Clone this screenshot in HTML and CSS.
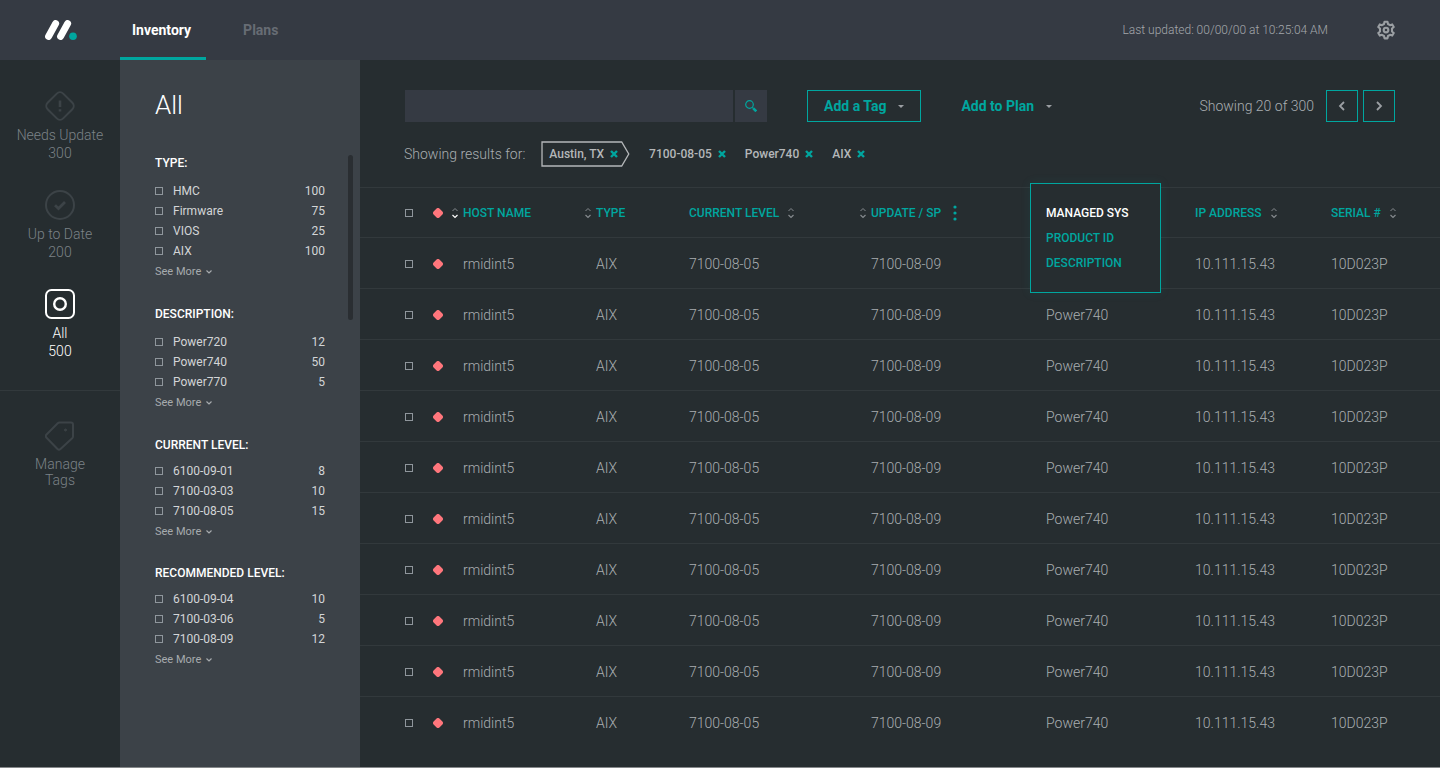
FILE: index.html
```html
<!DOCTYPE html>
<html lang="en">
<head>
<meta charset="utf-8">
<title>Inventory</title>
<link rel="stylesheet" href="styles.css">
</head>
<body>
<svg class="sprite" aria-hidden="true">
  <symbol id="sort" viewBox="0 0 8 12"><path d="M1.500 4 4 1.500 6.500 4" class="sort-up"/><path d="M1.500 8 4 10.500 6.500 8" class="sort-down"/></symbol>
  <symbol id="down" viewBox="0 0 8 6"><path d="M1.500 1.500 4 4 6.500 1.500" fill="none" stroke="currentColor" stroke-width="1.200"/></symbol>
  <symbol id="caret" viewBox="0 0 6 3"><path d="M0 0h6L3 3z" fill="currentColor"/></symbol>
  <symbol id="cross" viewBox="0 0 8 8"><path d="M1 1l6 6M7 1 1 7" fill="none" stroke="currentColor" stroke-width="2.400"/></symbol>
  <symbol id="gem" viewBox="0 0 10 10"><path d="M5 2 8 5 5 8 2 5z" fill="currentColor" stroke="currentColor" stroke-width="4" stroke-linejoin="round"/></symbol>
</svg>

<header class="topbar">
  <a class="logo" href="#" aria-label="Home">
    <svg width="32" height="20" viewBox="0 0 32 20"><path d="M3.600 16.400 10.600 3.600M15.600 16.400 22.600 3.600" stroke="#fff" stroke-width="7" stroke-linecap="round"/><circle cx="28" cy="16.200" r="3.800" fill="#00a69f"/></svg>
  </a>
  <nav class="tabs">
    <a class="tab tab-active" href="#">Inventory</a>
    <a class="tab" href="#">Plans</a>
  </nav>
  <p class="updated">Last updated: 00/00/00 at 10:25:04 AM</p>
  <button class="icon-button gear" aria-label="Settings">
    <svg width="20" height="20" viewBox="0 0 24 24" fill="none" stroke="currentColor" stroke-width="2.500" stroke-linejoin="round"><path d="M9.600 4.800 10.200 2h3.600l.6 2.800 2.400 1.400 2.700-.9 1.800 3.100-2.100 1.900v3.400l2.100 1.900-1.800 3.100-2.700-.9-2.400 1.400-.6 2.800h-3.600l-.6-2.800-2.400-1.400-2.700.9-1.800-3.100 2.100-1.900v-3.400L2.700 8.400l1.800-3.100 2.700.9z"/><circle cx="12" cy="12" r="2.800"/></svg>
  </button>
</header>

<div class="body">
  <nav class="rail">
    <div class="rail-group">
      <a class="rail-item" href="#">
        <svg width="30" height="30" viewBox="0 0 30 30" fill="none" stroke="currentColor" stroke-width="2"><rect x="4" y="4" width="22" height="22" rx="4.500" transform="rotate(45 15 15)"/><path d="M15 9.500v6.500M15 18.200v2.300" stroke-width="2.600"/></svg>
        <span>Needs Update</span><span>300</span>
      </a>
      <a class="rail-item" href="#">
        <svg width="30" height="30" viewBox="0 0 30 30" fill="none" stroke="currentColor" stroke-width="2"><circle cx="15" cy="15" r="14"/><path d="M10 15.200 13.500 18.500 20 12" stroke-width="2.800"/></svg>
        <span>Up to Date</span><span>200</span>
      </a>
      <a class="rail-item rail-active" href="#">
        <svg width="30" height="30" viewBox="0 0 30 30" fill="none" stroke="currentColor" stroke-width="2"><rect x="1" y="1" width="28" height="28" rx="5.500"/><circle cx="15" cy="15" r="5.800" stroke-width="2.400"/></svg>
        <span>All</span><span>500</span>
      </a>
    </div>
    <div class="rail-group">
      <a class="rail-item rail-tags" href="#">
        <svg width="30" height="30" viewBox="0 0 30 30" fill="none" stroke="currentColor" stroke-width="2" stroke-linejoin="round"><path d="M14.500 1.500H26q2 0 2 2v12q0 1-.8 1.800L15.500 28q-1.500 1.200-3 0L1.300 16.500q-1-1.500 0-2.800L12.700 2.300q.8-.8 1.800-.8z"/><circle cx="20.500" cy="9" r="1" fill="currentColor" stroke-width="1"/></svg>
        <span>Manage</span><span>Tags</span>
      </a>
    </div>
  </nav>

  <aside class="filters">
    <h1 class="filters-title">All</h1>
    <fieldset class="filter">
      <legend>TYPE:</legend>
      <label class="option"><input type="checkbox" class="check"><span>HMC</span><span class="count">100</span></label>
      <label class="option"><input type="checkbox" class="check"><span>Firmware</span><span class="count">75</span></label>
      <label class="option"><input type="checkbox" class="check"><span>VIOS</span><span class="count">25</span></label>
      <label class="option"><input type="checkbox" class="check"><span>AIX</span><span class="count">100</span></label>
      <button class="more">See More <svg width="8" height="6"><use href="#down"/></svg></button>
    </fieldset>
    <fieldset class="filter">
      <legend>DESCRIPTION:</legend>
      <label class="option"><input type="checkbox" class="check"><span>Power720</span><span class="count">12</span></label>
      <label class="option"><input type="checkbox" class="check"><span>Power740</span><span class="count">50</span></label>
      <label class="option"><input type="checkbox" class="check"><span>Power770</span><span class="count">5</span></label>
      <button class="more">See More <svg width="8" height="6"><use href="#down"/></svg></button>
    </fieldset>
    <fieldset class="filter filter-tight">
      <legend>CURRENT LEVEL:</legend>
      <label class="option"><input type="checkbox" class="check"><span>6100-09-01</span><span class="count">8</span></label>
      <label class="option"><input type="checkbox" class="check"><span>7100-03-03</span><span class="count">10</span></label>
      <label class="option"><input type="checkbox" class="check"><span>7100-08-05</span><span class="count">15</span></label>
      <button class="more">See More <svg width="8" height="6"><use href="#down"/></svg></button>
    </fieldset>
    <fieldset class="filter filter-tight">
      <legend>RECOMMENDED LEVEL:</legend>
      <label class="option"><input type="checkbox" class="check"><span>6100-09-04</span><span class="count">10</span></label>
      <label class="option"><input type="checkbox" class="check"><span>7100-03-06</span><span class="count">5</span></label>
      <label class="option"><input type="checkbox" class="check"><span>7100-08-09</span><span class="count">12</span></label>
      <button class="more">See More <svg width="8" height="6"><use href="#down"/></svg></button>
    </fieldset>
    <div class="scroll-thumb"></div>
  </aside>

  <main class="main">
    <div class="toolbar">
      <form class="search">
        <input class="search-box" type="text" aria-label="Search">
        <button class="search-button" type="button" aria-label="Run search"><svg width="12" height="12" viewBox="0 0 12 12" fill="none" stroke="currentColor"><circle cx="4.500" cy="4.500" r="3.800" stroke-width="1.200"/><path d="M7.300 7.300 8.500 8.500" stroke-width="1.200"/><path d="M8.300 8.300 11.300 11.300" stroke-width="2.600"/></svg></button>
      </form>
      <button class="action action-outlined">Add a Tag <svg width="6" height="3"><use href="#caret"/></svg></button>
      <button class="action">Add to Plan <svg width="6" height="3"><use href="#caret"/></svg></button>
      <p class="showing">Showing 20 of 300</p>
      <div class="pager">
        <button class="page-button" aria-label="Previous page"><svg width="8" height="10" viewBox="0 0 8 10"><path d="M6 1 2 5l4 4" fill="none" stroke="currentColor" stroke-width="1.800"/></svg></button>
        <button class="page-button" aria-label="Next page"><svg width="8" height="10" viewBox="0 0 8 10"><path d="M2 1l4 4-4 4" fill="none" stroke="currentColor" stroke-width="1.800"/></svg></button>
      </div>
    </div>

    <div class="results">
      <p class="results-label">Showing results for:</p>
      <span class="chip chip-tag">
        <svg class="chip-shape" viewBox="0 0 88 26" preserveAspectRatio="none" aria-hidden="true"><path d="M1 1H80L87 13 80 25H1z" fill="none" stroke="currentColor" stroke-width="1.300"/></svg>
        Austin, TX <button class="remove" aria-label="Remove Austin, TX"><svg width="8" height="8"><use href="#cross"/></svg></button></span>
      <span class="chip">7100-08-05 <button class="remove" aria-label="Remove 7100-08-05"><svg width="8" height="8"><use href="#cross"/></svg></button></span>
      <span class="chip">Power740 <button class="remove" aria-label="Remove Power740"><svg width="8" height="8"><use href="#cross"/></svg></button></span>
      <span class="chip">AIX <button class="remove" aria-label="Remove AIX"><svg width="8" height="8"><use href="#cross"/></svg></button></span>
    </div>

    <table class="hosts">
      <colgroup><col class="c-check"><col class="c-status"><col class="c-host"><col class="c-type"><col class="c-level"><col class="c-update"><col class="c-managed"><col class="c-ip"><col class="c-serial"></colgroup>
      <thead>
        <tr>
          <th class="lead"><input type="checkbox" class="check" aria-label="Select all"></th>
          <th><svg class="gem" width="10" height="10"><use href="#gem"/></svg></th>
          <th><button class="sort sort-desc"><svg width="8" height="12"><use href="#sort"/></svg>HOST NAME</button></th>
          <th><button class="sort"><svg width="8" height="12"><use href="#sort"/></svg>TYPE</button></th>
          <th><button class="sort sort-after">CURRENT LEVEL<svg width="8" height="12"><use href="#sort"/></svg></button></th>
          <th><div class="head-pair"><button class="sort"><svg width="8" height="12"><use href="#sort"/></svg>UPDATE / SP</button><button class="icon-button dots" aria-label="Column options"><svg width="4" height="16" viewBox="0 0 4 16" fill="currentColor"><circle cx="2" cy="2" r="1.600"/><circle cx="2" cy="8" r="1.600"/><circle cx="2" cy="14" r="1.600"/></svg></button></div></th>
          <th class="managed">
            <div class="menu"><button class="menu-item menu-current">MANAGED SYS</button><button class="menu-item">PRODUCT ID</button><button class="menu-item">DESCRIPTION</button></div>
          </th>
          <th><button class="sort sort-after">IP ADDRESS<svg width="8" height="12"><use href="#sort"/></svg></button></th>
          <th><button class="sort sort-after">SERIAL #<svg width="8" height="12"><use href="#sort"/></svg></button></th>
        </tr>
      </thead>
      <tbody>
        <tr><td class="lead"><input type="checkbox" class="check" aria-label="Select row 1"></td><td><svg class="gem" width="10" height="10"><use href="#gem"/></svg></td><td class="inset">rmidint5</td><td class="inset">AIX</td><td>7100-08-05</td><td class="inset">7100-08-09</td><td></td><td>10.111.15.43</td><td>10D023P</td></tr>
        <tr><td class="lead"><input type="checkbox" class="check" aria-label="Select row 2"></td><td><svg class="gem" width="10" height="10"><use href="#gem"/></svg></td><td class="inset">rmidint5</td><td class="inset">AIX</td><td>7100-08-05</td><td class="inset">7100-08-09</td><td>Power740</td><td>10.111.15.43</td><td>10D023P</td></tr>
        <tr><td class="lead"><input type="checkbox" class="check" aria-label="Select row 3"></td><td><svg class="gem" width="10" height="10"><use href="#gem"/></svg></td><td class="inset">rmidint5</td><td class="inset">AIX</td><td>7100-08-05</td><td class="inset">7100-08-09</td><td>Power740</td><td>10.111.15.43</td><td>10D023P</td></tr>
        <tr><td class="lead"><input type="checkbox" class="check" aria-label="Select row 4"></td><td><svg class="gem" width="10" height="10"><use href="#gem"/></svg></td><td class="inset">rmidint5</td><td class="inset">AIX</td><td>7100-08-05</td><td class="inset">7100-08-09</td><td>Power740</td><td>10.111.15.43</td><td>10D023P</td></tr>
        <tr><td class="lead"><input type="checkbox" class="check" aria-label="Select row 5"></td><td><svg class="gem" width="10" height="10"><use href="#gem"/></svg></td><td class="inset">rmidint5</td><td class="inset">AIX</td><td>7100-08-05</td><td class="inset">7100-08-09</td><td>Power740</td><td>10.111.15.43</td><td>10D023P</td></tr>
        <tr><td class="lead"><input type="checkbox" class="check" aria-label="Select row 6"></td><td><svg class="gem" width="10" height="10"><use href="#gem"/></svg></td><td class="inset">rmidint5</td><td class="inset">AIX</td><td>7100-08-05</td><td class="inset">7100-08-09</td><td>Power740</td><td>10.111.15.43</td><td>10D023P</td></tr>
        <tr><td class="lead"><input type="checkbox" class="check" aria-label="Select row 7"></td><td><svg class="gem" width="10" height="10"><use href="#gem"/></svg></td><td class="inset">rmidint5</td><td class="inset">AIX</td><td>7100-08-05</td><td class="inset">7100-08-09</td><td>Power740</td><td>10.111.15.43</td><td>10D023P</td></tr>
        <tr><td class="lead"><input type="checkbox" class="check" aria-label="Select row 8"></td><td><svg class="gem" width="10" height="10"><use href="#gem"/></svg></td><td class="inset">rmidint5</td><td class="inset">AIX</td><td>7100-08-05</td><td class="inset">7100-08-09</td><td>Power740</td><td>10.111.15.43</td><td>10D023P</td></tr>
        <tr><td class="lead"><input type="checkbox" class="check" aria-label="Select row 9"></td><td><svg class="gem" width="10" height="10"><use href="#gem"/></svg></td><td class="inset">rmidint5</td><td class="inset">AIX</td><td>7100-08-05</td><td class="inset">7100-08-09</td><td>Power740</td><td>10.111.15.43</td><td>10D023P</td></tr>
        <tr><td class="lead"><input type="checkbox" class="check" aria-label="Select row 10"></td><td><svg class="gem" width="10" height="10"><use href="#gem"/></svg></td><td class="inset">rmidint5</td><td class="inset">AIX</td><td>7100-08-05</td><td class="inset">7100-08-09</td><td>Power740</td><td>10.111.15.43</td><td>10D023P</td></tr>
      </tbody>
    </table>
  </main>
</div>
</body>
</html>
```

FILE: styles.css
```css
:root {
  --teal: #00a69f;
  --ground: #262d30;
  --line: #32393c;
  --muted: #9b9fa3;
}

* { box-sizing: border-box; }

body {
  margin: 0;
  min-height: 100vh;
  display: flex;
  flex-direction: column;
  background: var(--ground);
  color: #a9adb0;
  font-family: Roboto, "Liberation Sans", sans-serif;
  font-size: 14px;
  font-weight: 300;
  line-height: 18px;
  border-bottom: 1px solid #85888a;
}

p, h1 { margin: 0; }
a { color: inherit; text-decoration: none; }
svg { display: block; flex: none; }
.sprite { position: absolute; width: 0; height: 0; }

button {
  padding: 0;
  border: 0;
  background: none;
  color: inherit;
  font: inherit;
  white-space: nowrap;
  cursor: pointer;
}

.check {
  appearance: none;
  display: block;
  flex: none;
  width: 8px;
  height: 8px;
  margin: 0;
  border: 1px solid #8f969c;
}
.check:checked { background: var(--teal); }

/* Top bar */
.topbar {
  display: flex;
  align-items: center;
  height: 60px;
  padding-right: 44px;
  background: #353a43;
}
.logo { width: 120px; padding-left: 45px; }
.tabs { display: flex; gap: 25px; align-self: stretch; }
.tab {
  display: flex;
  align-items: center;
  padding: 3px 15px 0 12px;
  border-bottom: 3px solid transparent;
  color: #676c74;
  font-weight: 700;
}
.tab-active { border-color: var(--teal); color: #fff; }
.updated { margin-left: auto; color: #a4a8ac; font-size: 12px; }
.gear { margin-left: 48px; color: var(--muted); }

.body { flex: 1; display: flex; }

/* Status rail */
.rail { width: 120px; flex: none; }
.rail-group {
  display: flex;
  flex-direction: column;
  gap: 28px;
  padding: 31px 0 30px;
}
.rail-group + .rail-group { padding-top: 30px; border-top: 1px solid var(--line); }
.rail-item {
  display: flex;
  flex-direction: column;
  align-items: center;
  color: #7b8287;
}
.rail-item svg { margin-bottom: 5px; color: #3c4347; }
.rail-active, .rail-active svg { color: #fff; }
.rail-tags { line-height: 16px; }

/* Filters */
.filters {
  position: relative;
  width: 240px;
  flex: none;
  padding: 29px 35px;
  background: #3c4248;
}
.filters-title {
  margin-bottom: 32px;
  color: #fff;
  font-size: 26px;
  font-weight: 300;
  line-height: 32px;
}
.filter {
  display: flex;
  flex-direction: column;
  min-width: 0;
  margin: 0 0 21px;
  padding: 0;
  border: 0;
}
.filter legend {
  margin-bottom: 8px;
  padding: 0;
  color: #fff;
  font-size: 12px;
  font-weight: 500;
  line-height: 20px;
}
.filter-tight { margin-bottom: 20px; }
.filter-tight legend { margin-bottom: 6px; }
.option {
  display: flex;
  align-items: center;
  gap: 10px;
  color: #d3d5d7;
  font-size: 12px;
  font-weight: 400;
  line-height: 20px;
}
.count { margin-left: auto; }
.more {
  display: flex;
  align-items: center;
  gap: 4px;
  color: #a7abae;
  font-size: 11px;
  font-weight: 400;
  line-height: 22px;
}
.scroll-thumb {
  position: absolute;
  top: 95px;
  right: 7px;
  width: 5px;
  height: 165px;
  border-radius: 3px;
  background: #2a2e32;
}

/* Main */
.main { flex: 1; min-width: 0; padding-top: 30px; }
.toolbar {
  display: flex;
  align-items: center;
  padding: 0 45px;
}
.search {
  display: flex;
  flex: 0 1 362px;
  gap: 2px;
  margin-right: 40px;
}
.search-box {
  flex: 1;
  min-width: 0;
  height: 32px;
  padding: 0 10px;
  border: 0;
  outline: 0;
  background: #353a43;
  color: #fff;
  font: inherit;
}
.search-button {
  display: grid;
  place-items: center;
  width: 32px;
  height: 32px;
  background: #353a43;
  color: var(--teal);
}
.action {
  display: flex;
  align-items: center;
  gap: 12px;
  height: 32px;
  margin-right: 40px;
  color: var(--teal);
  font-weight: 700;
}
.action svg { color: var(--muted); }
.action-outlined { padding: 0 16px; border: 1px solid var(--teal); }
.showing { margin-left: auto; }
.pager { display: flex; gap: 5px; margin-left: 12px; }
.page-button {
  display: grid;
  place-items: center;
  width: 32px;
  height: 32px;
  border: 1px solid var(--teal);
  color: var(--muted);
}

.results {
  display: flex;
  align-items: center;
  height: 26px;
  margin: 19px 45px 20px 44px;
}
.results-label { margin-right: 16px; }
.chip {
  position: relative;
  display: flex;
  align-items: center;
  gap: 6px;
  height: 26px;
  margin-right: 19px;
  color: #b4b7b9;
  font-size: 12px;
  font-weight: 500;
}
.chip-tag { padding: 0 12px 0 8px; }
.chip-shape {
  position: absolute;
  inset: 0;
  width: 100%;
  height: 100%;
}
.remove { color: var(--teal); }

/* Host table */
.hosts {
  width: 100%;
  table-layout: fixed;
  border-collapse: collapse;
  font-size: 14px;
}
.c-check { width: 73px; }
.c-status { width: 18px; }
.c-host { width: 133px; }
.c-type { width: 105px; }
.c-level { width: 170px; }
.c-update { width: 187px; }
.c-managed { width: 149px; }
.c-ip { width: 136px; }
.c-serial { width: 109px; }
.hosts th, .hosts td { padding: 0; text-align: left; white-space: nowrap; }
.hosts th { height: 50px; }
.hosts td { height: 51px; padding-top: 2px; }
.hosts tr { border-top: 1px solid var(--line); }
.hosts .lead { padding-left: 45px; }
.hosts .inset { padding-left: 12px; }
.gem { color: #ff767c; }

.sort {
  display: flex;
  align-items: center;
  gap: 4px;
  color: var(--teal);
  font-size: 12px;
  font-weight: 500;
}
.sort svg { color: #858a8e; fill: none; stroke: currentColor; }
.sort-after { gap: 8px; }
.sort-desc svg { --down: #fff; }
.sort-down { stroke: var(--down, currentColor); stroke-width: 1.2; }
.head-pair { display: flex; align-items: center; gap: 12px; }
.dots { color: var(--teal); }

.managed { position: relative; }
.menu {
  position: absolute;
  top: -5px;
  left: -16px;
  display: flex;
  flex-direction: column;
  align-items: flex-start;
  width: 131px;
  padding: 17px 15px 16px;
  border: 1px solid var(--teal);
  background: var(--ground);
  box-shadow: 0 0 10px rgba(0, 166, 159, 0.1);
}
.menu-item {
  color: var(--teal);
  font-size: 12px;
  font-weight: 500;
  line-height: 25px;
}
.menu-current { color: #fff; }
```
